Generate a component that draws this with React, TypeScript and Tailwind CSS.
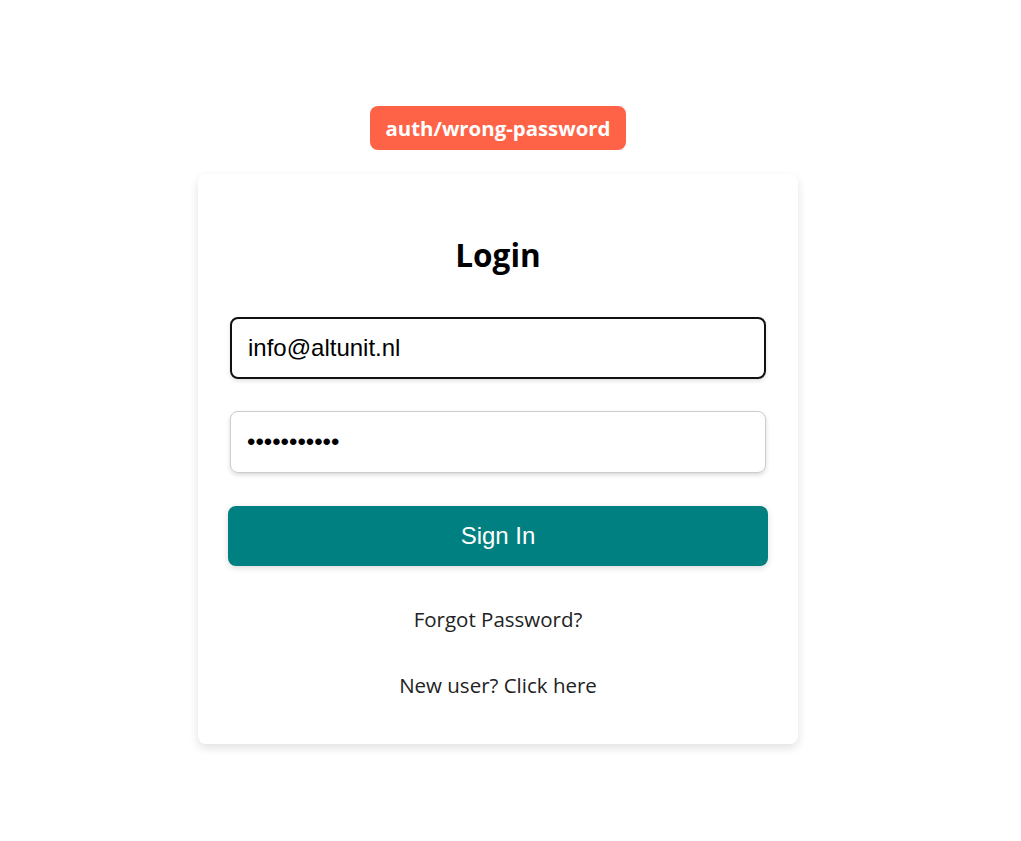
import { useState } from 'react';

function App() {
  const [email, setEmail] = useState('info@altunit.nl');
  const [password, setPassword] = useState('12345678901');

  return (
    <div className="min-h-screen bg-white font-['Open_Sans',sans-serif]">
      <div className="w-[996px] flex flex-col items-center pt-[106px]">
        {/* Error badge */}
        <div className="h-[44px] px-4 rounded-lg bg-[#ff6347] text-white font-bold text-[20.4px] flex items-center">
          auth/wrong-password
        </div>

        {/* Card */}
        <div className="mt-6 w-[600px] bg-white rounded-lg shadow-[0_4px_10px_rgba(0,0,0,0.12)] px-8 pt-8 pb-[45px] flex flex-col items-center">
          <h2 className="mt-[31px] h-9 leading-9 text-[31.5px] font-bold text-black">Login</h2>

          <input
            type="email"
            value={email}
            onChange={(e) => setEmail(e.target.value)}
            className="mt-[44px] w-[536px] h-[62px] px-4 rounded-lg border-2 border-[#111] shadow-[0_2px_4px_rgba(0,0,0,0.12)] outline-none text-[24px] text-black font-['Liberation_Sans',Arial,sans-serif]"
          />
          <input
            type="password"
            value={password}
            onChange={(e) => setPassword(e.target.value)}
            className="mt-8 w-[536px] h-[62px] px-4 rounded-lg border border-[#ccc] shadow-[0_2px_4px_rgba(0,0,0,0.15)] outline-none text-[24px] text-black font-['Liberation_Sans',Arial,sans-serif]"
          />

          <button className="mt-[33px] w-[540px] h-[60px] rounded-lg bg-[#008080] text-white text-[24px] shadow-[0_2px_6px_rgba(0,0,0,0.15)] font-['Liberation_Sans',Arial,sans-serif]">
            Sign In
          </button>

          <a className="mt-[39px] h-7 leading-7 text-[20.5px] text-[#222] cursor-pointer">Forgot Password?</a>
          <a className="mt-[38px] h-7 leading-7 text-[20.5px] text-[#222] cursor-pointer">New user? Click here</a>
        </div>
      </div>
    </div>
  );
}

export default App;
